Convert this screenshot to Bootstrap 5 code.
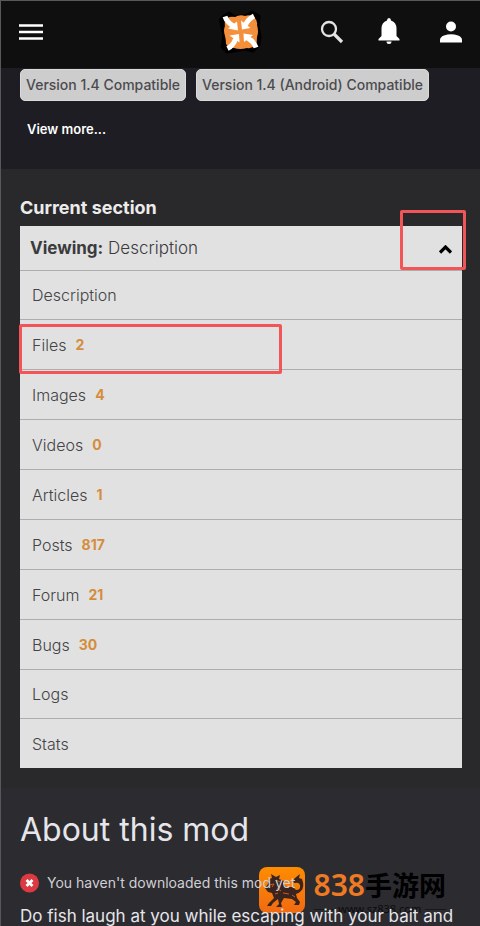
<!DOCTYPE html>
<html lang="en">
<head>
<meta charset="utf-8">
<meta name="viewport" content="width=device-width, initial-scale=1">
<title>About this mod</title>
<link href="https://cdn.jsdelivr.net/npm/bootstrap@5.3.0/dist/css/bootstrap.min.css" rel="stylesheet">
<style>
body { font-family: Inter, "Noto Sans CJK SC", sans-serif; background: #2c2b30; color: #e6e6ea; border-left: 1px solid #56585b; border-top: 1px solid #56585b; }
.topbar { height: 67px; background: #0f0f0f; padding: 0 18px 6px; }
.topbar .side { flex: 1 1 0; }
.icon-btn { background: none; border: 0; padding: 0; line-height: 0; color: #fff; }
.bell { margin: 0 39px 0 33px; }
.tags { background: #1d1d23; height: 101px; padding: 1px 19px 0; }
.tag-row { gap: 10px; }
.tag { background: #cdcdcd; color: #4b4b4d; border: 1px solid #dadada; border-radius: 5px; font-size: 14px; font-weight: 500; line-height: 30px; padding: 0 5px; white-space: nowrap; }
.more { color: #fff; font-size: 13px; font-weight: 600; line-height: 20px; padding: 0 7px; margin-top: 18px; }
.section-nav { background: #29292b; padding: 27px 18px 20px 19px; }
.section-title { font-size: 18px; font-weight: 700; line-height: 24px; margin: 0 0 6px; color: #ececec; }
.nav-list { border-radius: 0; }
.viewing { height: 45px; background: #e1e1e1; color: #3b3b3d; border: 0; border-bottom: 1px solid #adadad; padding: 2px 10px 0; font-size: 17px; font-weight: 300; }
.viewing b { font-weight: 700; }
.entry { height: 50px; background: #e1e1e1; color: #444446; border: 0; border-bottom: 1px solid #adadad; padding: 0 12px; font-size: 16px; font-weight: 300; gap: 9px; }
.entry.plain { height: 49px; }
.entry:last-child { border-bottom: 0; }
.entry.marked { border-bottom: 1px solid #adadad; }
.entry .count { color: #d58d3d; font-size: 14px; font-weight: 700; }
.ring { border: 3px solid #f25558; border-radius: 2px; pointer-events: none; z-index: 3; }
.ring-toggle { right: -4px; top: -16px; width: 66px; height: 60px; }
.ring-files { left: -1px; top: 4px; width: 263px; height: 50px; }
.about { padding: 22px 18px 0 19px; }
.about h1 { font-size: 32px; font-weight: 400; line-height: 40px; margin: 0 0 23px; }
.status { font-size: 14px; line-height: 20px; gap: 8px; color: #cfcfd3; margin: 0 0 13px; }
.blurb { font-size: 17px; line-height: 20px; margin: 0; white-space: nowrap; }
.over { z-index: 2; }
.stamp { right: 34px; bottom: 12px; height: 47px; gap: 9px; }
.stamp .words { font-size: 27px; font-weight: 700; line-height: 36px; color: #000; white-space: nowrap; }
.stamp .num { color: #ee7a24; font-family: "Noto Sans", sans-serif; font-size: 30px; font-weight: 600; }
.stamp .site { font-family: "Noto Sans", sans-serif; font-size: 11px; line-height: 8px; color: #0b0b0c; gap: 4px; }
.stamp .site i { height: 1px; background: #18181a; flex: 1; }
</style>
<script src="https://cdn.jsdelivr.net/npm/bootstrap@5.3.0/dist/js/bootstrap.bundle.min.js"></script>
</head>
<body>
<header class="topbar d-flex align-items-center">
  <div class="side d-flex">
    <button class="icon-btn" type="button" aria-label="Menu"><svg width="24" height="18" viewBox="0 0 24 18"><path d="M0 2.500h24M0 9h24M0 15.500h24" stroke="#fff" stroke-width="2.600"/></svg></button>
  </div>
  <a href="#" class="icon-btn" aria-label="Home"><svg width="44" height="44" viewBox="0 0 44 44">
    <path d="M5 6 10 3l6 4 12-2 5-3 7 4-1 10 2 10-1 9-6 6-8-2-11 2-7 1-5-5 2-11-2-9-2-7z" fill="#000" stroke="#000" stroke-width="3" stroke-linejoin="round"/>
    <path d="M8 8q4-2 8-1 5-3 10-1 5-2 9 1 4 4 3 8 2 7 0 12 0 5-1 8-4 4-9 3-7 2-13 0-5 0-8-4 0-4-1-8-2-6 0-10-1-5 2-8z" fill="#f4903c"/>
    <g fill="none" stroke="#fff" stroke-width="5">
      <path d="M6 6.500q2 6 8.500 9.500"/>
      <path d="M35 6q-6 3-8.500 9"/>
      <path d="M37 37.500q-2-6-8.500-9.500"/>
      <path d="M8.500 38.500q6-3 8-9.500"/>
    </g>
    <g fill="#fff">
      <path d="M19 20.500 9 18.500 18 11.500z"/>
      <path d="M23 19.500 22 10.500 31.500 18z"/>
      <path d="M24.500 23.500 34 25 25 32z"/>
      <path d="M20 24 10.500 25.500 20.500 32.500z"/>
    </g>
  </svg></a>
  <div class="side d-flex justify-content-end align-items-center">
    <button class="icon-btn" type="button" aria-label="Search"><svg width="24" height="24" viewBox="0 0 24 24" fill="none" stroke="#e4e4e6"><circle cx="9" cy="9" r="7" stroke-width="2.300"/><path d="M14 14l8 8" stroke-width="3.200"/></svg></button>
    <button class="icon-btn bell" type="button" aria-label="Notifications"><svg width="24" height="28" viewBox="0 0 24 28" fill="currentColor"><path d="M12 0q2 0 2 2.500 5.500 2 5.500 8V18l3 3v1.500h-21V21l3-3v-7.500q0-6 5.500-8Q10 0 12 0zM9.500 23.500h5q0 2.500-2.500 2.500t-2.500-2.500z"/></svg></button>
    <button class="icon-btn" type="button" aria-label="Account"><svg width="22" height="22" viewBox="0 0 22 22" fill="currentColor"><circle cx="11" cy="5.500" r="5"/><path d="M0 21.500V19q0-3 4-4.500 7-2.500 14 0 4 1.500 4 4.500v2.500z"/></svg></button>
  </div>
</header>

<section class="tags">
  <div class="d-flex tag-row">
    <a class="tag text-decoration-none" href="#">Version 1.4 Compatible</a>
    <a class="tag text-decoration-none" href="#">Version 1.4 (Android) Compatible</a>
  </div>
  <a class="more d-inline-block text-decoration-none" href="#">View more...</a>
</section>

<nav class="section-nav" aria-label="Current section">
  <h2 class="section-title">Current section</h2>
  <div class="position-relative">
    <button class="viewing w-100 d-flex align-items-center justify-content-between" type="button" aria-expanded="true">
      <span><b>Viewing:</b> Description</span>
      <svg width="13" height="9" viewBox="0 0 13 9" fill="none" stroke="#000" stroke-width="3.200"><path d="M1 7.500 6.500 2 12 7.500"/></svg>
    </button>
    <span class="ring ring-toggle position-absolute"></span>
  </div>
  <div class="list-group nav-list">
    <a href="#" class="list-group-item entry plain d-flex align-items-center">Description</a>
    <div class="position-relative">
      <a href="#" class="list-group-item entry marked d-flex align-items-center">Files <span class="count">2</span></a>
      <span class="ring ring-files position-absolute"></span>
    </div>
    <a href="#" class="list-group-item entry d-flex align-items-center">Images <span class="count">4</span></a>
    <a href="#" class="list-group-item entry d-flex align-items-center">Videos <span class="count">0</span></a>
    <a href="#" class="list-group-item entry d-flex align-items-center">Articles <span class="count">1</span></a>
    <a href="#" class="list-group-item entry d-flex align-items-center">Posts <span class="count">817</span></a>
    <a href="#" class="list-group-item entry d-flex align-items-center">Forum <span class="count">21</span></a>
    <a href="#" class="list-group-item entry d-flex align-items-center">Bugs <span class="count">30</span></a>
    <a href="#" class="list-group-item entry plain d-flex align-items-center">Logs</a>
    <a href="#" class="list-group-item entry plain d-flex align-items-center">Stats</a>
  </div>
</nav>

<main class="about position-relative">
  <h1>About this mod</h1>
  <p class="status over position-relative d-flex align-items-center"><svg width="19" height="20" viewBox="0 0 19 20"><circle cx="9.500" cy="10" r="9.500" fill="#dc3a42"/><path d="M6.500 7l6 6M12.500 7l-6 6" stroke="#fff" stroke-width="2.800"/></svg>You haven't downloaded this mod yet</p>
  <p class="blurb over position-relative">Do fish laugh at you while escaping with your bait and</p>
  <div class="stamp position-absolute d-flex">
    <svg width="46" height="46" viewBox="0 0 46 46">
      <defs><linearGradient id="tile" x2="0" y2="1"><stop stop-color="#ff8c00"/><stop offset="1" stop-color="#f06a12"/></linearGradient></defs>
      <rect width="46" height="46" rx="8" fill="url(#tile)"/>
      <path d="M6 21l3-4 1-5 3-1-1-4 5 3 4-2-1 4 5 2-1 3 4 3 6 0 3 3q5 0 4-5-1-3-5-2l-3-1 3-4 5-4-1 4 3 1q3 8-1 12-3 3-5 3l1 4 3 4-1 3h-5l2-3-4-3-8-1-3 5 1 4h-6l3-3-1-5-5 4-2 3-4 0 2-3 5-5-2-5-4-1z" fill="#3a2420"/>
      <path d="M10 18l5-1-2 3M17 13l4 2M18 21l4 3M24 26l6 1M33 28l3 2M16 27l3-1" fill="none" stroke="#c85a17"/>
    </svg>
    <div>
      <div class="words"><span class="num">838</span>手游网</div>
      <div class="site d-flex align-items-center"><i></i><span>www.sz838.com</span><i></i></div>
    </div>
  </div>
</main>
</body>
</html>
